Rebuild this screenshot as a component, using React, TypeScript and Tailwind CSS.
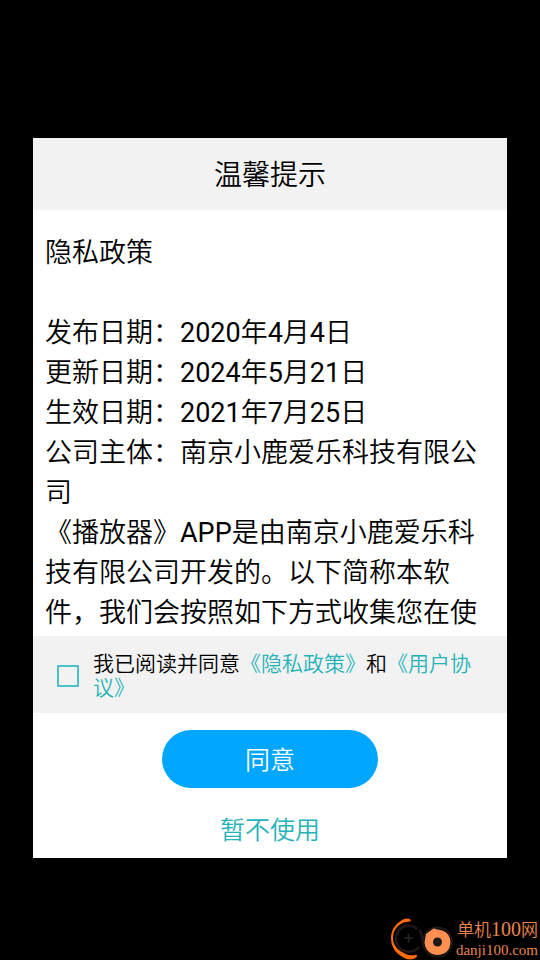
const policyLines = [
  '隐私政策',
  '',
  '发布日期：2020年4月4日',
  '更新日期：2024年5月21日',
  '生效日期：2021年7月25日',
  '公司主体：南京小鹿爱乐科技有限公司',
  '《播放器》APP是由南京小鹿爱乐科技有限公司开发的。以下简称本软件，我们会按照如下方式收集您在使',
];

function Watermark() {
  return (
    <div className="absolute right-[2px] bottom-0 flex items-end gap-[2px]">
      <svg width="64" height="44" viewBox="0 0 64 44" fill="none" aria-hidden="true">
        <path d="M27.5 13A13 13 0 1 0 29 31M29 14C33 17 31 21 32.500 25" stroke="#1f1818" strokeWidth="2.5" />
        <path d="M18.500 17.500v9M14 22h9" stroke="#2a2424" strokeWidth="1.5" />
        <path d="M21 5C20 1.500 14 2 10 5.500C4 9.500 1 15 1 22C1 30 5 36.500 11 40C16 44 23 45 27 40.500L26.500 38.500C22 40 18 39.500 14 37C7 34 3 28.500 3 22C3 15.500 6.500 10.500 11.500 7.500C14.500 5.500 18 6.500 21 5Z" fill="#ff6a0a" />
        <circle cx="47.500" cy="26" r="14.500" stroke="#1f1818" strokeWidth="2" />
        <path d="M36 18L43.500 12.500C45 12 46 13.500 48 13.500C55 14 60.500 19 60.500 26C60.500 34 55 39 47.500 39C40 39 34.500 33 34.500 26Z" fill="#ff9052" />
        <circle cx="47.500" cy="26" r="4.500" fill="#1f1818" />
      </svg>
      <div className="flex flex-col items-end pb-px font-['Liberation_Serif','Noto_Sans_CJK_SC_DemiLight','Noto_Sans_CJK_SC',serif] text-[#e8854c]">
        <span className="text-[17px] leading-[20px]">
          单机<span className="text-[20px]">100</span>网
        </span>
        <span className="text-[15px] leading-[18px]">danji100.com</span>
      </div>
    </div>
  );
}

export default function App() {
  return (
    <main className="relative min-h-screen bg-black px-[33px] pt-[138px] pb-[102px] font-[Roboto,'Noto_Sans_CJK_SC_DemiLight','Noto_Sans_CJK_SC',sans-serif] text-black" lang="zh-CN">
      <section className="flex flex-col bg-white" aria-labelledby="title">
        <h1 id="title" className="bg-[#f2f2f2] pt-[18px] pb-[14px] text-center text-[28px] leading-[40px] font-normal">
          温馨提示
        </h1>
        <div className="h-[426px] overflow-hidden px-3 pt-[23px] text-[27px] leading-[40px]">
          {policyLines.map((line, i) => (
            <p key={i} className="min-h-10">{line}</p>
          ))}
        </div>
        <div className="flex items-center bg-[#f2f2f2] pt-4 pr-8 pb-[13px] pl-6 text-[21px] leading-[24px]">
          <input
            id="agree"
            type="checkbox"
            className="size-[22px] shrink-0 appearance-none border-2 border-[#4cc0c8] checked:bg-[#33b5bd]"
          />
          <label htmlFor="agree" className="ml-[14px]">
            我已阅读并同意<a href="#privacy" className="text-[#26b2b9]">《隐私政策》</a>和<a href="#terms" className="text-[#26b2b9]">《用户协议》</a>
          </label>
        </div>
        <div className="flex flex-col items-center pt-[17px] pb-[7px] text-[25px]">
          <button type="button" className="h-[58px] w-[216px] rounded-full bg-[#00a6ff] pt-[3px] text-white">
            同意
          </button>
          <button type="button" className="mt-[23px] leading-[40px] text-[#26b2b9]">
            暂不使用
          </button>
        </div>
      </section>
      <Watermark />
    </main>
  );
}
